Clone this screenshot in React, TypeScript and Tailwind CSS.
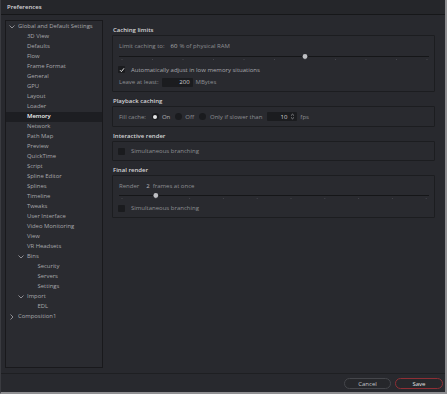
import React from "react";

type Item = { label: string; level: 0 | 1 | 2; chev?: "down" | "right"; selected?: boolean };

const items: Item[] = [
  { label: "Global and Default Settings", level: 0, chev: "down" },
  { label: "3D View", level: 1 },
  { label: "Defaults", level: 1 },
  { label: "Flow", level: 1 },
  { label: "Frame Format", level: 1 },
  { label: "General", level: 1 },
  { label: "GPU", level: 1 },
  { label: "Layout", level: 1 },
  { label: "Loader", level: 1 },
  { label: "Memory", level: 1, selected: true },
  { label: "Network", level: 1 },
  { label: "Path Map", level: 1 },
  { label: "Preview", level: 1 },
  { label: "QuickTime", level: 1 },
  { label: "Script", level: 1 },
  { label: "Spline Editor", level: 1 },
  { label: "Splines", level: 1 },
  { label: "Timeline", level: 1 },
  { label: "Tweaks", level: 1 },
  { label: "User Interface", level: 1 },
  { label: "Video Monitoring", level: 1 },
  { label: "View", level: 1 },
  { label: "VR Headsets", level: 1 },
  { label: "Bins", level: 1, chev: "down" },
  { label: "Security", level: 2 },
  { label: "Servers", level: 2 },
  { label: "Settings", level: 2 },
  { label: "Import", level: 1, chev: "down" },
  { label: "EDL", level: 2 },
  { label: "Composition1", level: 0, chev: "right" },
];

function Chevron({ dir }: { dir: "down" | "right" }) {
  return dir === "down" ? (
    <svg width="6" height="4" viewBox="0 0 6 4">
      <polyline points="0.5,0.5 3,3 5.5,0.5" fill="none" stroke="#9a9a9e" strokeWidth="0.9" />
    </svg>
  ) : (
    <svg width="4" height="6" viewBox="0 0 4 6">
      <polyline points="0.5,0.5 3,3 0.5,5.5" fill="none" stroke="#9a9a9e" strokeWidth="0.9" />
    </svg>
  );
}

function Slider({ positions, knob }: { positions: number[]; knob: number }) {
  return (
    <svg width="310" height="10" viewBox="0 0 310 10" className="block">
      <line x1="0" y1="4.5" x2="310" y2="4.5" stroke="#151618" strokeWidth="1.2" />
      {positions.map((p, i) => (
        <rect key={i} x={p - 0.5} y="7" width="1" height="1" fill="#44454b" />
      ))}
      <circle cx={positions[knob]} cy="4.5" r="2.4" fill="#bfc0c4" />
    </svg>
  );
}

function CheckBox({ checked }: { checked?: boolean }) {
  return (
    <div className="w-[7px] h-[7px] bg-[#1a1b1e] rounded-[1px] flex items-center justify-center shrink-0">
      {checked && (
        <svg width="6" height="6" viewBox="0 0 6 6">
          <polyline points="1,3.2 2.4,4.6 5,1.3" fill="none" stroke="#e8e8e8" strokeWidth="1" />
        </svg>
      )}
    </div>
  );
}

function Radio({ on }: { on?: boolean }) {
  return (
    <div className="w-[7px] h-[7px] rounded-full bg-[#1a1b1e] flex items-center justify-center shrink-0">
      {on && <div className="w-[4px] h-[4px] rounded-full bg-[#e4e4e6]" />}
    </div>
  );
}

function Heading({ children, first }: { children: React.ReactNode; first?: boolean }) {
  return (
    <div className={`h-[10px] flex items-center pl-[1px] text-[6px] font-semibold text-[#d6d6d8] ${first ? "" : "mt-[4px]"}`}>
      {children}
    </div>
  );
}

const panel = "border border-[#1c1d20] bg-[#292a2f] rounded-[1px] pl-[6px]";

export default function App() {
  const p1 = Array.from({ length: 11 }, (_, k) => 3 + 30.5 * k);
  const p4 = Array.from({ length: 10 }, (_, k) => 3 + 33.8 * k);
  return (
    <div className="w-[447px] h-[394px] bg-[#28292e] flex flex-col border-r-2 border-b-2 border-l border-r-[#8f8f92] border-b-[#8f8f92] border-l-[#3a3b40] [font-family:'Open_Sans',sans-serif] leading-none overflow-hidden">
      <div className="h-[15px] shrink-0 bg-[#25262a] border-b border-[#161719] flex items-center pl-[6px] text-[6px] font-semibold text-[#d8d8da]">
        Preferences
      </div>
      <div className="flex-1 flex pt-[5px] pb-[5px] pl-[4px] min-h-0">
        <div className="w-[98px] border border-[#19191c] bg-[#2a2b30] pt-[0.5px] text-[5.9px] text-[#a9a9ad]">
          {items.map((it) => (
            <div
              key={it.label}
              className={`h-[10px] flex items-center ${it.selected ? "bg-[#1d1e22] text-[#f2f2f2] font-semibold" : ""} ${
                it.level === 1 ? "pl-[9px]" : it.level === 2 ? "pl-[19.5px]" : ""
              }`}
            >
              <div className="w-[12px] flex justify-center items-center shrink-0">{it.chev && <Chevron dir={it.chev} />}</div>
              <span>{it.label}</span>
            </div>
          ))}
        </div>
        <div className="w-[323px] ml-[9px] pt-[5px] flex flex-col text-[6px] text-[#8e8f93]">
          <Heading first>Caching limits</Heading>
          <div className={`${panel} h-[57px] pt-[5px]`}>
            <div className="h-[10px] flex items-center">
              <span>Limit caching to:</span>
              <span className="ml-[6px] text-[#b8b8bc]">60</span>
              <span className="ml-[2px]">% of physical RAM</span>
            </div>
            <div className="h-[10px] mt-[1px] -ml-[0.5px]">
              <Slider positions={p1} knob={6} />
            </div>
            <div className="h-[10px] mt-[2.5px] flex items-center gap-[6px] -ml-[1px]">
              <CheckBox checked />
              <span className="text-[#a8a9ad]">Automatically adjust in low memory situations</span>
            </div>
            <div className="h-[10px] mt-[2.5px] flex items-center">
              <span>Leave at least:</span>
              <div className="ml-[3px] w-[31px] h-[9px] bg-[#1b1c1f] rounded-[1px] flex items-center justify-end pr-[3px] text-[#d4d4d6]">200</div>
              <span className="ml-[3px]">MBytes</span>
            </div>
          </div>
          <Heading>Playback caching</Heading>
          <div className={`${panel} h-[21px] flex items-center`}>
            <span>Fill cache:</span>
            <div className="ml-[6px]"><Radio on /></div>
            <span className="ml-[3px] text-[#b0b1b5]">On</span>
            <div className="ml-[5px]"><Radio /></div>
            <span className="ml-[3px]">Off</span>
            <div className="ml-[5px]"><Radio /></div>
            <span className="ml-[4px]">Only if slower than</span>
            <div className="ml-[5px] w-[30px] h-[9px] bg-[#1b1c1f] rounded-[1px] flex items-center justify-end pr-[2px] text-[#d4d4d6]">
              <span>10</span>
              <svg width="5" height="7" viewBox="0 0 5 7" className="ml-[3px]">
                <polyline points="1,2.6 2.5,1.2 4,2.6" fill="none" stroke="#9a9a9e" strokeWidth="0.8" />
                <polyline points="1,4.4 2.5,5.8 4,4.4" fill="none" stroke="#9a9a9e" strokeWidth="0.8" />
              </svg>
            </div>
            <span className="ml-[3px]">fps</span>
          </div>
          <Heading>Interactive render</Heading>
          <div className={`${panel} h-[20px] flex items-center gap-[6px]`}>
            <div className="-ml-[1px] flex items-center gap-[6px]">
              <CheckBox />
              <span>Simultaneous branching</span>
            </div>
          </div>
          <Heading>Final render</Heading>
          <div className={`${panel} h-[43px] pt-[5px]`}>
            <div className="h-[10px] flex items-center">
              <span>Render</span>
              <span className="ml-[7px] text-[#b8b8bc]">2</span>
              <span className="ml-[3px]">frames at once</span>
            </div>
            <div className="h-[10px] -ml-[0.5px]">
              <Slider positions={p4} knob={1} />
            </div>
            <div className="h-[10px] mt-[2px] flex items-center gap-[6px] -ml-[1px]">
              <CheckBox />
              <span>Simultaneous branching</span>
            </div>
          </div>
        </div>
      </div>
      <div className="h-[19px] shrink-0 border-t border-[#1e1f22] flex items-center justify-end gap-[4px] pr-[2px] pt-[1px] text-[6px]">
        <div className="w-[47px] h-[11px] rounded-full border border-[#45464b] bg-[#26272b] flex items-center justify-center text-[#c4c4c8]">
          Cancel
        </div>
        <div className="w-[48px] h-[11px] rounded-full border border-[#8e2f35] bg-[#26272b] flex items-center justify-center text-[#e2e2e4]">
          Save
        </div>
      </div>
    </div>
  );
}
